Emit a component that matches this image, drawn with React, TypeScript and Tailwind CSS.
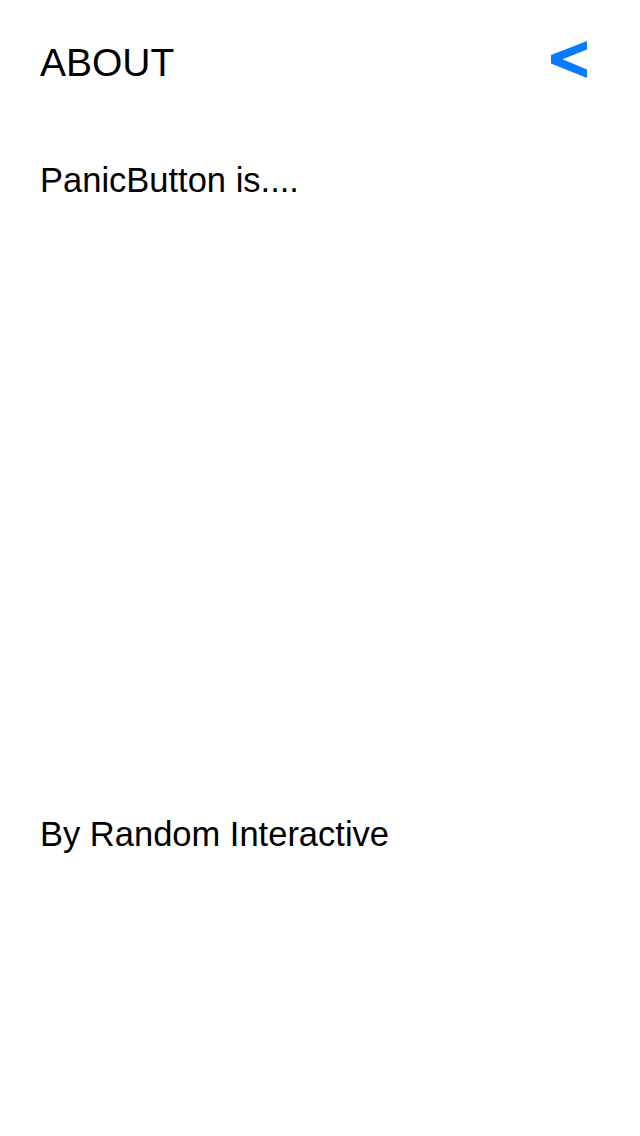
import React from "react"

function BackChevron() {
  return (
    <svg viewBox="0 0 40 40" className="w-10 h-10 -mt-[3px] mr-[11px]" aria-label="Back">
      <polygon points="38,1 2,15 2,23.5 38,38 38,29.5 13.5,19.3 38,9.5" fill="#0a7aff" />
    </svg>
  )
}

export default function App() {
  return (
    <div className="min-h-[1136px] w-[640px] bg-white text-black font-['Liberation_Sans',Arial,sans-serif]">
      <div className="px-10 pt-[43px]">
        {/* header */}
        <div className="flex items-start justify-between">
          <h1 className="text-[39px] leading-none font-normal">ABOUT</h1>
          <BackChevron />
        </div>

        <p className="mt-[81px] text-[34.5px] leading-none">PanicButton is....</p>

        <p className="mt-[619px] text-[34.5px] leading-none">By Random Interactive</p>
      </div>
    </div>
  )
}
